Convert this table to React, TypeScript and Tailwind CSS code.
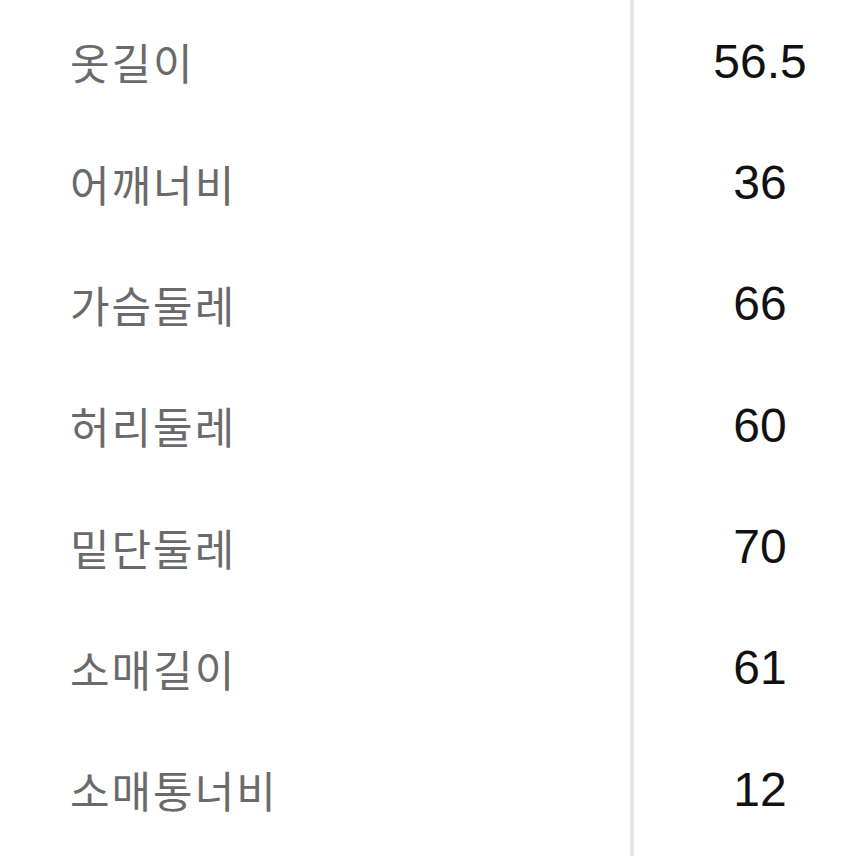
const rows: [string, string][] = [
  ["옷길이", "56.5"],
  ["어깨너비", "36"],
  ["가슴둘레", "66"],
  ["허리둘레", "60"],
  ["밑단둘레", "70"],
  ["소매길이", "61"],
  ["소매통너비", "12"],
];

export default function App() {
  return (
    <div className="w-[856px] h-[856px] bg-white flex overflow-hidden">
      <div className="w-[630px] pt-[1px] pl-[70px] flex flex-col">
        {rows.map(([label]) => (
          <div
            key={label}
            className="h-[121.33px] flex items-center text-[43px] tracking-[2px] text-[#6a6a6a]"
            style={{ fontFamily: '"Noto Sans CJK KR", "Noto Sans", sans-serif' }}
          >
            {label}
          </div>
        ))}
      </div>
      <div className="flex-1 border-l-4 border-[#e7e7e7] pt-[1px] pl-[30px] flex flex-col">
        {rows.map(([label, value]) => (
          <div
            key={label}
            className="h-[121.33px] flex items-center justify-center text-[48px] text-[#111]"
            style={{ fontFamily: '"Liberation Sans", Arial, sans-serif' }}
          >
            {value}
          </div>
        ))}
      </div>
    </div>
  );
}
